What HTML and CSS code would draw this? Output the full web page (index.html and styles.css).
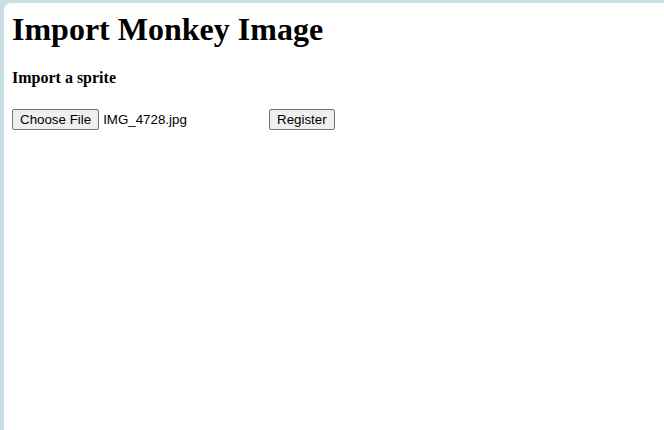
FILE: index.html
```html
<!DOCTYPE html>
<html lang="en">
<head>
<meta charset="utf-8">
<title>Import Monkey Image</title>
<link rel="stylesheet" href="styles.css">
</head>
<body>
<div class="panel">
  <h1 class="title">Import Monkey Image</h1>
  <h4 class="subtitle">Import a sprite</h4>
  <form class="form-row">
    <span class="file-input">
      <button type="button" class="btn">Choose File</button>
      <span class="file-name">IMG_4728.jpg</span>
    </span>
    <button type="button" class="btn">Register</button>
  </form>
</div>
</body>
</html>
```
FILE: styles.css
```css
html, body {
  margin: 0;
  padding: 0;
  height: 100%;
}
body {
  background: #c8dfe3;
  font-family: "Liberation Serif", "Times New Roman", serif;
  color: #000;
  overflow: hidden;
}
.panel {
  margin: 3px 0 0 4px;
  background: #fff;
  border-top-left-radius: 7px;
  height: calc(100% - 3px);
  box-sizing: border-box;
  padding: 8px 8px;
}
.title {
  margin: 0 0 21.44px;
  font-size: 32px;
  font-weight: bold;
}
.subtitle {
  margin: 21.28px 0;
  font-size: 16px;
  font-weight: bold;
}
.form-row {
  display: flex;
  align-items: center;
  gap: 4px;
  margin: 0;
}
.file-input {
  display: inline-flex;
  align-items: center;
  gap: 4px;
  width: 253px;
}
.btn {
  font-family: "Liberation Sans", Arial, sans-serif;
  font-size: 13.33px;
  color: #000;
  background: #efefef;
  border: 1px solid #767676;
  border-radius: 2px;
  padding: 1px 7px;
  height: 21px;
  line-height: 17px;
  margin: 0;
}
.file-name {
  font-family: "Liberation Sans", Arial, sans-serif;
  font-size: 13.33px;
  white-space: nowrap;
}
```
